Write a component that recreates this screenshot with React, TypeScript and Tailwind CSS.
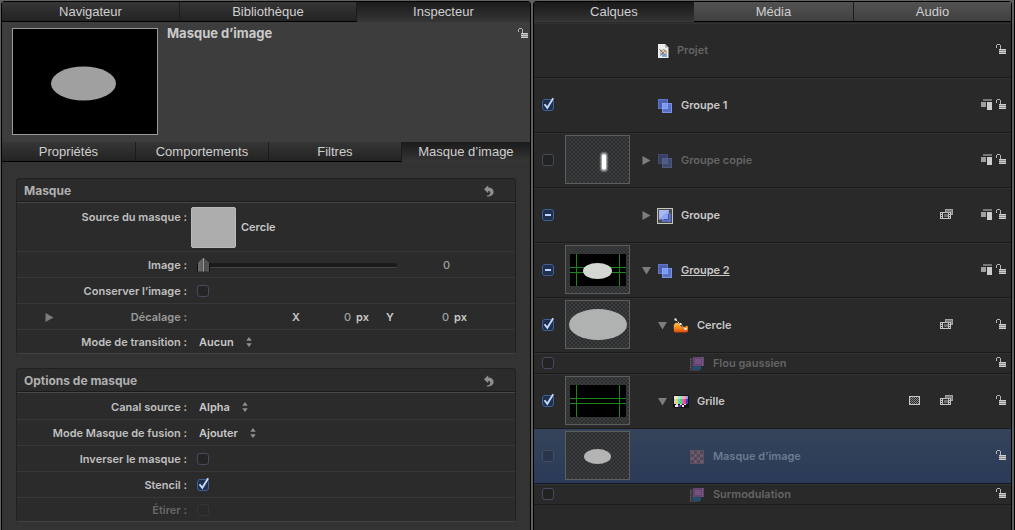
import { useState } from 'react'
import type { ReactNode } from 'react'
import clsx from 'clsx'

type CheckState = 'on' | 'off' | 'mixed'
type IconName = 'project' | 'group' | 'framedGroup' | 'shape' | 'filter' | 'generator' | 'mask'

interface Layer {
  id: string
  name: string
  icon: IconName
  level: 0 | 1 | 2
  check?: CheckState
  disclosure?: 'open' | 'closed'
  thumb?: 'stroke' | 'guidesEllipse' | 'ellipse' | 'guides' | 'smallEllipse'
  dim?: boolean
  small?: boolean
  selected?: boolean
  underline?: boolean
  badges?: ('mask' | 'film' | 'stack')[]
}

const LAYERS: Layer[] = [
  { id: 'projet', name: 'Projet', icon: 'project', level: 0, dim: true },
  { id: 'g1', name: 'Groupe 1', icon: 'group', level: 0, check: 'on', badges: ['stack'] },
  { id: 'gc', name: 'Groupe copie', icon: 'group', level: 0, check: 'off', disclosure: 'closed', thumb: 'stroke', dim: true, badges: ['stack'] },
  { id: 'g', name: 'Groupe', icon: 'framedGroup', level: 0, check: 'mixed', disclosure: 'closed', badges: ['film', 'stack'] },
  { id: 'g2', name: 'Groupe 2', icon: 'group', level: 0, check: 'mixed', disclosure: 'open', thumb: 'guidesEllipse', underline: true, badges: ['stack'] },
  { id: 'cercle', name: 'Cercle', icon: 'shape', level: 1, check: 'on', disclosure: 'open', thumb: 'ellipse', badges: ['film'] },
  { id: 'flou', name: 'Flou gaussien', icon: 'filter', level: 2, check: 'off', dim: true, small: true },
  { id: 'grille', name: 'Grille', icon: 'generator', level: 1, check: 'on', disclosure: 'open', thumb: 'guides', badges: ['mask', 'film'] },
  { id: 'masque', name: 'Masque d’image', icon: 'mask', level: 2, check: 'off', thumb: 'smallEllipse', dim: true, selected: true },
  { id: 'surmod', name: 'Surmodulation', icon: 'filter', level: 2, check: 'off', dim: true, small: true },
]

function LockIcon() {
  return (
    <svg width="10" height="10" viewBox="0 0 10 10" shapeRendering="crispEdges">
      <path d="M0 1h1v3H0zM1 0h3v1H1zM4 1h1v4H4z" fill="#b5b5b5" />
      <path d="M3 5h7v5H3z" fill="#8c8c8c" />
      <path d="M3 5h7v1H3zM3 7h7v1H3zM3 9h7v1H3z" fill="#cfcfcf" />
    </svg>
  )
}

function StackIcon() {
  return (
    <svg width="11" height="11" viewBox="0 0 11 11" shapeRendering="crispEdges">
      <path d="M2 0h9v2H2z" fill="#777" />
      <path d="M0 3h5v5H0z" fill="#a0a0a0" />
      <path d="M6 3h5v8H6z" fill="#cdcdcd" />
    </svg>
  )
}

function FilmIcon() {
  return (
    <svg width="13" height="10" viewBox="0 0 13 10" shapeRendering="crispEdges">
      <path d="M5 0h8v6H5z" fill="#a2a2a2" />
      <path d="M6 1h6v4H6z" fill="#7c7c7c" />
      <path d="M0 3h11v7H0z" fill="#c4c4c4" />
      <path d="M1 4h1v1H1zM1 6h1v1H1zM1 8h1v1H1zM9 4h1v1H9zM9 6h1v1H9zM9 8h1v1H9zM3 4h5v5H3z" fill="#2c2c2c" />
      <path d="M4 5h4v3H4z" fill="#6c6c6c" />
      <path d="M5 3h5v1H5zM8 4h1v2H8z" fill="#b4b4b4" />
    </svg>
  )
}

function MaskBadge() {
  return (
    <svg width="11" height="9" viewBox="0 0 11 9" shapeRendering="crispEdges">
      <path d="M0 0h11v9H0z" fill="#c8c8c8" />
      <path d="M1 1h9v7H1z" fill="#2a2a2a" />
      {Array.from({ length: 63 }, (_, i) => i).filter(i => i % 2 === 0).map(i => (
        <rect key={i} x={1 + (i % 9)} y={1 + Math.floor(i / 9)} width="1" height="1" fill="#848484" />
      ))}
    </svg>
  )
}

function ResetIcon() {
  return (
    <svg width="10" height="12" viewBox="0 0 10 12">
      <path d="M0 4.200 4.200.2v2.200C7.600 2.400 9.600 4 9.600 6.800c0 2.800-1.800 4.500-5.200 4.700H2.800v-1c2.200-.2 3.500-1 3.500-2.700 0-1.200-.7-1.800-2.100-1.800v2.200z" fill="#8f8f8f" />
    </svg>
  )
}

function Stepper() {
  return (
    <svg width="6" height="10" viewBox="0 0 6 10">
      <path d="M3 0l2.700 3.800H.3zM3 10l2.700-3.800H.3z" fill="#909090" />
    </svg>
  )
}

function Triangle({ open }: { open?: boolean }) {
  return (
    <svg width="9" height="9" viewBox="0 0 9 9">
      <path d={open ? 'M0 1h9L4.500 8.500z' : 'M.5 0v9l8-4.500z'} fill="#7d7d7d" />
    </svg>
  )
}

const BARS = ['#cfcfcf', '#e0dc4a', '#4fd0dc', '#4ad65c', '#e85adf', '#e84c5c', '#3a42d6']

function LayerIcon({ name }: { name: IconName }) {
  switch (name) {
    case 'project':
      return (
        <svg width="11" height="14" viewBox="0 0 11 14">
          <path d="M0 0h7l3.500 3.500V14H0z" fill="#ececec" />
          <path d="M7 0v3.500h3.500z" fill="#a8a8a8" />
          <path d="M1.500 5.500l6 5.500M2 11.500L8 6" stroke="#555" strokeWidth=".9" fill="none" />
          <circle cx="5.500" cy="8.500" r="2.800" stroke="#777" strokeWidth=".8" fill="none" />
          <path d="M6.500 6.500h2v2h-2z" fill="#e9a23c" />
          <path d="M4 10h5v3H4z" fill="#6a93cf" opacity=".7" />
        </svg>
      )
    case 'group':
      return (
        <svg width="14" height="14" viewBox="0 0 14 14">
          <rect x=".5" y=".5" width="9" height="9" fill="#4c60ac" stroke="#5f75cc" />
          <rect x="4.500" y="4.500" width="9" height="9" fill="#5a70c2" stroke="#7b92e4" />
          <rect x="4.500" y="4.500" width="5" height="5" fill="#7a9af4" stroke="#88a4f8" />
        </svg>
      )
    case 'framedGroup':
      return (
        <svg width="16" height="16" viewBox="0 0 16 16">
          <rect x=".5" y=".5" width="15" height="15" fill="#4a4a4a" stroke="#c4c4c0" />
          <rect x="5" y="5.500" width="9" height="8.500" fill="#5a70c2" />
          <rect x="2" y="2" width="10" height="9.500" fill="#8ea4ee" />
          <path d="M2 11.500V2h10z" fill="#b2c0f4" opacity=".7" />
          <path d="M11.500 6v5.500H7" fill="none" stroke="#3f56b0" />
        </svg>
      )
    case 'shape':
      return (
        <svg width="16" height="15" viewBox="0 0 16 15">
          <defs>
            <linearGradient id="shapeFill" x1="0" y1="0" x2="0" y2="1">
              <stop offset="0" stopColor="#ffc04a" />
              <stop offset=".55" stopColor="#f58a1c" />
              <stop offset="1" stopColor="#d8430c" />
            </linearGradient>
          </defs>
          <path d="M.8 7C2.500 3.500 6 4.500 7.500 7.500s4.500 1.500 6 .2l1.500.8v4q0 2-2 2H2.500Q.8 14.500.8 12.500z" fill="url(#shapeFill)" />
          <path d="M2.500 1.500L12.500 11" stroke="#f5e6d0" strokeDasharray="2 1" />
          <path d="M1.500.5h2v2h-2zM6.500 5h2v2h-2zM11.500 10h2v2h-2z" fill="#fff" />
        </svg>
      )
    case 'filter':
      return (
        <svg width="14" height="14" viewBox="0 0 14 14" opacity=".75">
          <path d="M0 1h9v13H0z" fill="#44414c" />
          <path d="M.5 2v12" stroke="#78757e" strokeDasharray="1 1" />
          <path d="M3 9h8v4H3z" fill="#245a86" />
          <path d="M3 0h11v9H3z" fill="#775086" />
          <path d="M5 2h6v5H5z" fill="#8d5f9e" />
          <path d="M12.500 0v9" stroke="#a878b4" strokeDasharray="1 1" />
        </svg>
      )
    case 'generator':
      return (
        <svg width="16" height="13" viewBox="0 0 16 13">
          <rect width="16" height="13" rx="1.500" fill="#141414" />
          {BARS.map((c, i) => (
            <rect key={c} x={1 + i * 2} y="1" width="2" height="8" fill={c} />
          ))}
          <path d="M1 1h14v3H1z" fill="#fff" opacity=".45" />
          <path d="M3 9h2v1H3zM7 9h2v1H7zM11 9h2v1h-2z" fill="#e0e0e0" />
          <path d="M2 10h3v2H2zM9 10h2v2H9z" fill="#eee" />
          <path d="M5 10h3v2H5z" fill="#6a36c4" />
        </svg>
      )
    case 'mask':
      return (
        <svg width="14" height="14" viewBox="0 0 14 14" shapeRendering="crispEdges">
          <path d="M0 0h14v14H0z" fill="#5d5262" />
          <path d="M1 1h3v3H1zM7 1h3v3H7zM4 4h3v3H4zM10 4h3v3h-3zM1 7h3v3H1zM7 7h3v3H7zM4 10h3v3H4zM10 10h3v3h-3z" fill="#74586a" />
          <path d="M4 1h3v3H4zM10 1h3v3h-3zM1 4h3v3H1zM7 4h3v3H7zM4 7h3v3H4zM10 7h3v3h-3zM1 10h3v3H1zM7 10h3v3H7z" fill="#4c485c" />
        </svg>
      )
  }
}

function Thumb({ kind }: { kind: NonNullable<Layer['thumb']> }) {
  const guides = kind === 'guides' || kind === 'guidesEllipse'
  return (
    <svg width="65" height="49" viewBox="0 0 65 49">
      <defs>
        <pattern id="checker" width="4" height="4" patternUnits="userSpaceOnUse">
          <path d="M0 0h4v4H0z" fill="#2b2d2e" />
          <path d="M0 0h2v2H0zM2 2h2v2H2z" fill="#3b3d3e" />
        </pattern>
        <filter id="glow" x="-1" y="-1" width="3" height="3">
          <feGaussianBlur stdDeviation="1" />
        </filter>
      </defs>
      <rect x=".5" y=".5" width="64" height="48" fill="url(#checker)" stroke="#5c5e5e" />
      {kind === 'stroke' && (
        <>
          <rect x="36" y="18" width="6" height="18" rx="2" fill="#ddd" filter="url(#glow)" />
          <rect x="37" y="20" width="4" height="14" rx="1" fill="#fff" />
        </>
      )}
      {guides && (
        <>
          <path d="M5 9h56v32H5z" fill="#000" />
          <path d="M11.500 9v32M54.500 9v32M5 22.500h56M5 27.500h56" stroke="#1c861c" />
        </>
      )}
      {kind === 'guidesEllipse' && <ellipse cx="32.500" cy="26" rx="14.500" ry="8" fill="#d4d6d4" />}
      {kind === 'ellipse' && <ellipse cx="33" cy="24.500" rx="29" ry="15.500" fill="#b0b2b2" />}
      {kind === 'smallEllipse' && <ellipse cx="32.500" cy="25.500" rx="13.500" ry="7.500" fill="#b4b4b4" />}
    </svg>
  )
}

function CheckBox({ id, label, initial = 'off', disabled }: { id: string; label?: string; initial?: CheckState; disabled?: boolean }) {
  const [state, setState] = useState<CheckState>(initial)
  return (
    <span className="relative block size-3 shrink-0">
      <input
        id={id}
        type="checkbox"
        aria-label={label}
        disabled={disabled}
        checked={state === 'on'}
        onChange={e => setState(e.target.checked ? 'on' : 'off')}
        className={clsx(
          'block size-3 appearance-none rounded-[3px] border',
          state === 'off' && (disabled ? 'border-[#343434] bg-[#2a2a2a]' : 'border-[#434b5e] bg-black/15'),
          state !== 'off' && 'border-[#3f6096] bg-[#20304e]',
        )}
      />
      {state !== 'off' && (
        <svg className="pointer-events-none absolute inset-0 overflow-visible" width="12" height="12" viewBox="0 0 12 12">
          {state === 'on' ? (
            <path d="M2.500 5.200L5.300 8.800 11.200-.8" fill="none" stroke="#c6dcff" strokeWidth="1.800" />
          ) : (
            <path d="M3 5h6v2H3z" fill="#bcd4ff" />
          )}
        </svg>
      )}
    </span>
  )
}

function TabBar({ tabs, active, columns, tone = 'dark' }: { tabs: string[]; active: number; columns: string; tone?: 'dark' | 'light' }) {
  const [current, setCurrent] = useState(active)
  return (
    <div role="tablist" className={clsx('grid h-5 text-[13px] leading-5 text-[#cfcfcf]', columns)}>
      {tabs.map((t, i) => (
        <button
          key={t}
          role="tab"
          aria-selected={i === current}
          onClick={() => setCurrent(i)}
          className={clsx(
            'flex h-5 items-start justify-center bg-linear-to-b',
            i === current && tone === 'dark' && 'from-[#1b1b1b] to-[#363636]',
            i === current && tone === 'light' && 'border-b border-[#3a3a3a] from-[#191919] to-[#333]',
            i !== current && 'border-b border-b-black',
            i !== current && i < tabs.length - 1 && 'border-r border-r-[#1c1c1c]',
            i !== current && tone === 'dark' && 'from-[#363636] to-[#232323]',
            i !== current && tone === 'light' && 'from-[#525252] to-[#404040]',
          )}
        >
          <span className="block h-[19px] leading-[19px]">{t}</span>
        </button>
      ))}
    </div>
  )
}

function Section({ title, children }: { title: string; children: ReactNode }) {
  return (
    <section className="rounded-[4px] border border-[#212121] border-b-[#414141] bg-[#2b2b2b]">
      <header className="flex h-6 items-center justify-between border-b border-[#484848] pr-[21px] pl-[7px] shadow-[inset_0_-1px_0_#1a1a1a]">
        <h2 className="text-[12px] font-bold text-[#b0b0b0]">{title}</h2>
        <button aria-label="Réinitialiser"><ResetIcon /></button>
      </header>
      <div className="divide-y divide-[#373737] pt-px">{children}</div>
    </section>
  )
}

function Row({ label, htmlFor, tone = 'text-[#c0c0c0]', disclosure, children }: {
  label: string
  htmlFor: string
  tone?: string
  disclosure?: boolean
  children: ReactNode
}) {
  return (
    <div className="flex h-[26px] items-center pt-px last:h-[23px]">
      <div className="flex w-[180px] shrink-0 items-center pr-[10px]">
        {disclosure && <button aria-label="Développer" className="ml-7"><Triangle /></button>}
        <label htmlFor={htmlFor} className={clsx('ml-auto', tone)}>{label} :</label>
      </div>
      {children}
    </div>
  )
}

function PopUp({ id, options }: { id: string; options: string[] }) {
  return (
    <span className="flex items-center gap-3 pl-0.5">
      <select id={id} className="[field-sizing:content] appearance-none bg-transparent text-[#c8c8c8]">
        {options.map(o => <option key={o}>{o}</option>)}
      </select>
      <Stepper />
    </span>
  )
}

function Inspector() {
  return (
    <section className="min-w-0 flex-[530] rounded-t-[4px] border border-b-0 border-black bg-[#333]">
      <TabBar tabs={['Navigateur', 'Bibliothèque', 'Inspecteur']} active={2} columns="grid-cols-[178fr_177fr_173fr]" />
      <div className="flex items-start bg-[#3d3d3d] pt-1.5 pr-0.5 pb-[7px] pl-2.5">
        <svg width="146" height="107" viewBox="0 0 146 107" className="shrink-0">
          <rect x=".5" y=".5" width="145" height="106" stroke="#9a9a9a" />
          <ellipse cx="71.500" cy="55.500" rx="32.500" ry="17" fill="#a0a0a0" />
        </svg>
        <h1 className="ml-[9px] -mt-1 text-[13px] leading-[18px] font-bold text-[#cacaca]">Masque d’image</h1>
        <button aria-label="Verrouiller" className="ml-auto"><LockIcon /></button>
      </div>
      <TabBar
        tabs={['Propriétés', 'Comportements', 'Filtres', 'Masque d’image']}
        active={3}
        columns="grid-cols-[134fr_133fr_133fr_128fr]"
      />
      <div className="space-y-[14px] px-[14px] pt-4 pb-2">
        <Section title="Masque">
          <div className="flex h-12 items-start">
            <span id="source-label" className="w-[170px] shrink-0 pt-[5px] text-right text-[#c0c0c0]">Source du masque :</span>
            <button aria-labelledby="source-label" className="mt-[3px] ml-1 h-[41px] w-[45px] rounded-[2px] border border-[#bababa] bg-[#adadad]" />
            <span className="pt-[15px] pl-[5px] text-[#c8c8c8]">Cercle</span>
          </div>
          <Row label="Image" htmlFor="image">
            <input
              id="image"
              type="range"
              defaultValue={0}
              className="h-4 w-[200px] appearance-none bg-transparent [&::-webkit-slider-runnable-track]:h-[5px] [&::-webkit-slider-runnable-track]:rounded-full [&::-webkit-slider-runnable-track]:border-b [&::-webkit-slider-runnable-track]:border-[#454545] [&::-webkit-slider-runnable-track]:bg-[#1b1b1b] [&::-webkit-slider-thumb]:-mt-[5px] [&::-webkit-slider-thumb]:h-[14px] [&::-webkit-slider-thumb]:w-[13px] [&::-webkit-slider-thumb]:appearance-none [&::-webkit-slider-thumb]:bg-[linear-gradient(90deg,#111_1px,#6a6a6a_1px,#5c5c5c_6px,#9a9a9a_6px,#9a9a9a_7px,#4c4c4c_7px,#585858_12px,#111_12px)] [&::-webkit-slider-thumb]:[clip-path:polygon(50%_0,100%_44%,100%_100%,0_100%,0_44%)]"
            />
            <input aria-label="Valeur d’image" defaultValue="0" className="w-[53px] bg-transparent text-right font-medium text-[#a0a0a0]" />
          </Row>
          <Row label="Conserver l’image" htmlFor="conserver">
            <CheckBox id="conserver" />
          </Row>
          <Row label="Décalage" htmlFor="offset-x" tone="text-[#9a9a9a]" disclosure>
            <label htmlFor="offset-x" className="ml-[95px] w-2.5 text-[#c8c8c8]">X</label>
            <input id="offset-x" defaultValue="0" className="w-[49px] bg-transparent text-right font-medium text-[#a0a0a0]" />
            <span className="w-[35px] pl-[5px] text-[#c8c8c8]">px</span>
            <label htmlFor="offset-y" className="w-2.5 text-[#c8c8c8]">Y</label>
            <input id="offset-y" defaultValue="0" className="w-[53px] bg-transparent text-right font-medium text-[#a0a0a0]" />
            <span className="pl-[5px] text-[#c8c8c8]">px</span>
          </Row>
          <Row label="Mode de transition" htmlFor="transition">
            <PopUp id="transition" options={['Aucun', 'Répéter', 'Miroir']} />
          </Row>
        </Section>

        <Section title="Options de masque">
          <Row label="Canal source" htmlFor="canal">
            <PopUp id="canal" options={['Alpha', 'Rouge', 'Vert', 'Bleu', 'Luminance']} />
          </Row>
          <Row label="Mode Masque de fusion" htmlFor="fusion">
            <PopUp id="fusion" options={['Ajouter', 'Soustraire', 'Remplacer']} />
          </Row>
          <Row label="Inverser le masque" htmlFor="inverser">
            <CheckBox id="inverser" />
          </Row>
          <Row label="Stencil" htmlFor="stencil">
            <CheckBox id="stencil" initial="on" />
          </Row>
          <Row label="Étirer" htmlFor="etirer" tone="text-[#686868]">
            <CheckBox id="etirer" disabled />
          </Row>
        </Section>
      </div>
    </section>
  )
}

function LayerRow({ layer }: { layer: Layer }) {
  const { level, badges = [] } = layer
  return (
    <li
      className={clsx(
        'flex items-center border-b pr-[5px]',
        layer.small ? 'h-[21px]' : 'h-[55px]',
        layer.selected
          ? 'border-[#10182a] bg-linear-to-b from-[#35445a] to-[#2a3a58]'
          : 'border-[#1a1a1a] bg-[#292929] shadow-[inset_0_1px_0_#323232]',
      )}
    >
      <div className="w-[31px] shrink-0 pl-2">
        {layer.check && <CheckBox id={`check-${layer.id}`} label={layer.name} initial={layer.check} />}
      </div>
      <div className="w-[65px] shrink-0 self-start pt-0.5">{layer.thumb && <Thumb kind={layer.thumb} />}</div>
      <div className={clsx('flex shrink-0 justify-end pr-[7px]', level === 0 && 'w-7', level === 1 && 'w-11', level === 2 && 'w-[60px]')}>
        {layer.disclosure && (
          <button aria-label={`Afficher ${layer.name}`}><Triangle open={layer.disclosure === 'open'} /></button>
        )}
      </div>
      <div className={clsx('flex shrink-0 justify-center pt-px', layer.icon === 'project' ? 'w-[11px]' : 'w-[14px]', layer.dim && layer.icon === 'group' && 'opacity-45')}>
        <span className="shrink-0"><LayerIcon name={layer.icon} /></span>
      </div>
      <span
        className={clsx(
          layer.icon === 'project' ? 'pl-2' : 'pl-[9px]',
          layer.selected ? 'text-[#6c7a90]' : layer.dim ? 'text-[#646464]' : 'text-[#c8c8c8]',
        )}
      >
        <span className={clsx(layer.underline && 'underline')}>{layer.name}</span>
      </span>
      <div className="ml-auto grid grid-cols-[31px_41px_15px_10px] items-center pb-0.5">
        <span>{badges.includes('mask') && <MaskBadge />}</span>
        <span>{badges.includes('film') && <FilmIcon />}</span>
        <span>{badges.includes('stack') && <StackIcon />}</span>
        <button aria-label={`Verrouiller ${layer.name}`}><LockIcon /></button>
      </div>
    </li>
  )
}

function LayersPanel() {
  return (
    <section className="min-w-0 flex-[479] rounded-t-[4px] border border-b-0 border-black bg-[#292929]">
      <TabBar tabs={['Calques', 'Média', 'Audio']} active={0} columns="grid-cols-[160fr_160fr_157fr]" tone="light" />
      <ul className="pt-px">
        {LAYERS.map(l => <LayerRow key={l.id} layer={l} />)}
      </ul>
    </section>
  )
}

export default function App() {
  return (
    <main className="flex min-h-screen gap-0.5 border-r border-black bg-[#61615e] pt-px pr-0.5 pl-px font-['Inter','Liberation_Sans',sans-serif] text-[11px] leading-4 font-semibold [&_[role=tablist]]:font-['Liberation_Sans',Arial,sans-serif] [&_[role=tablist]]:font-normal [&_svg]:block">
      <Inspector />
      <LayersPanel />
    </main>
  )
}
